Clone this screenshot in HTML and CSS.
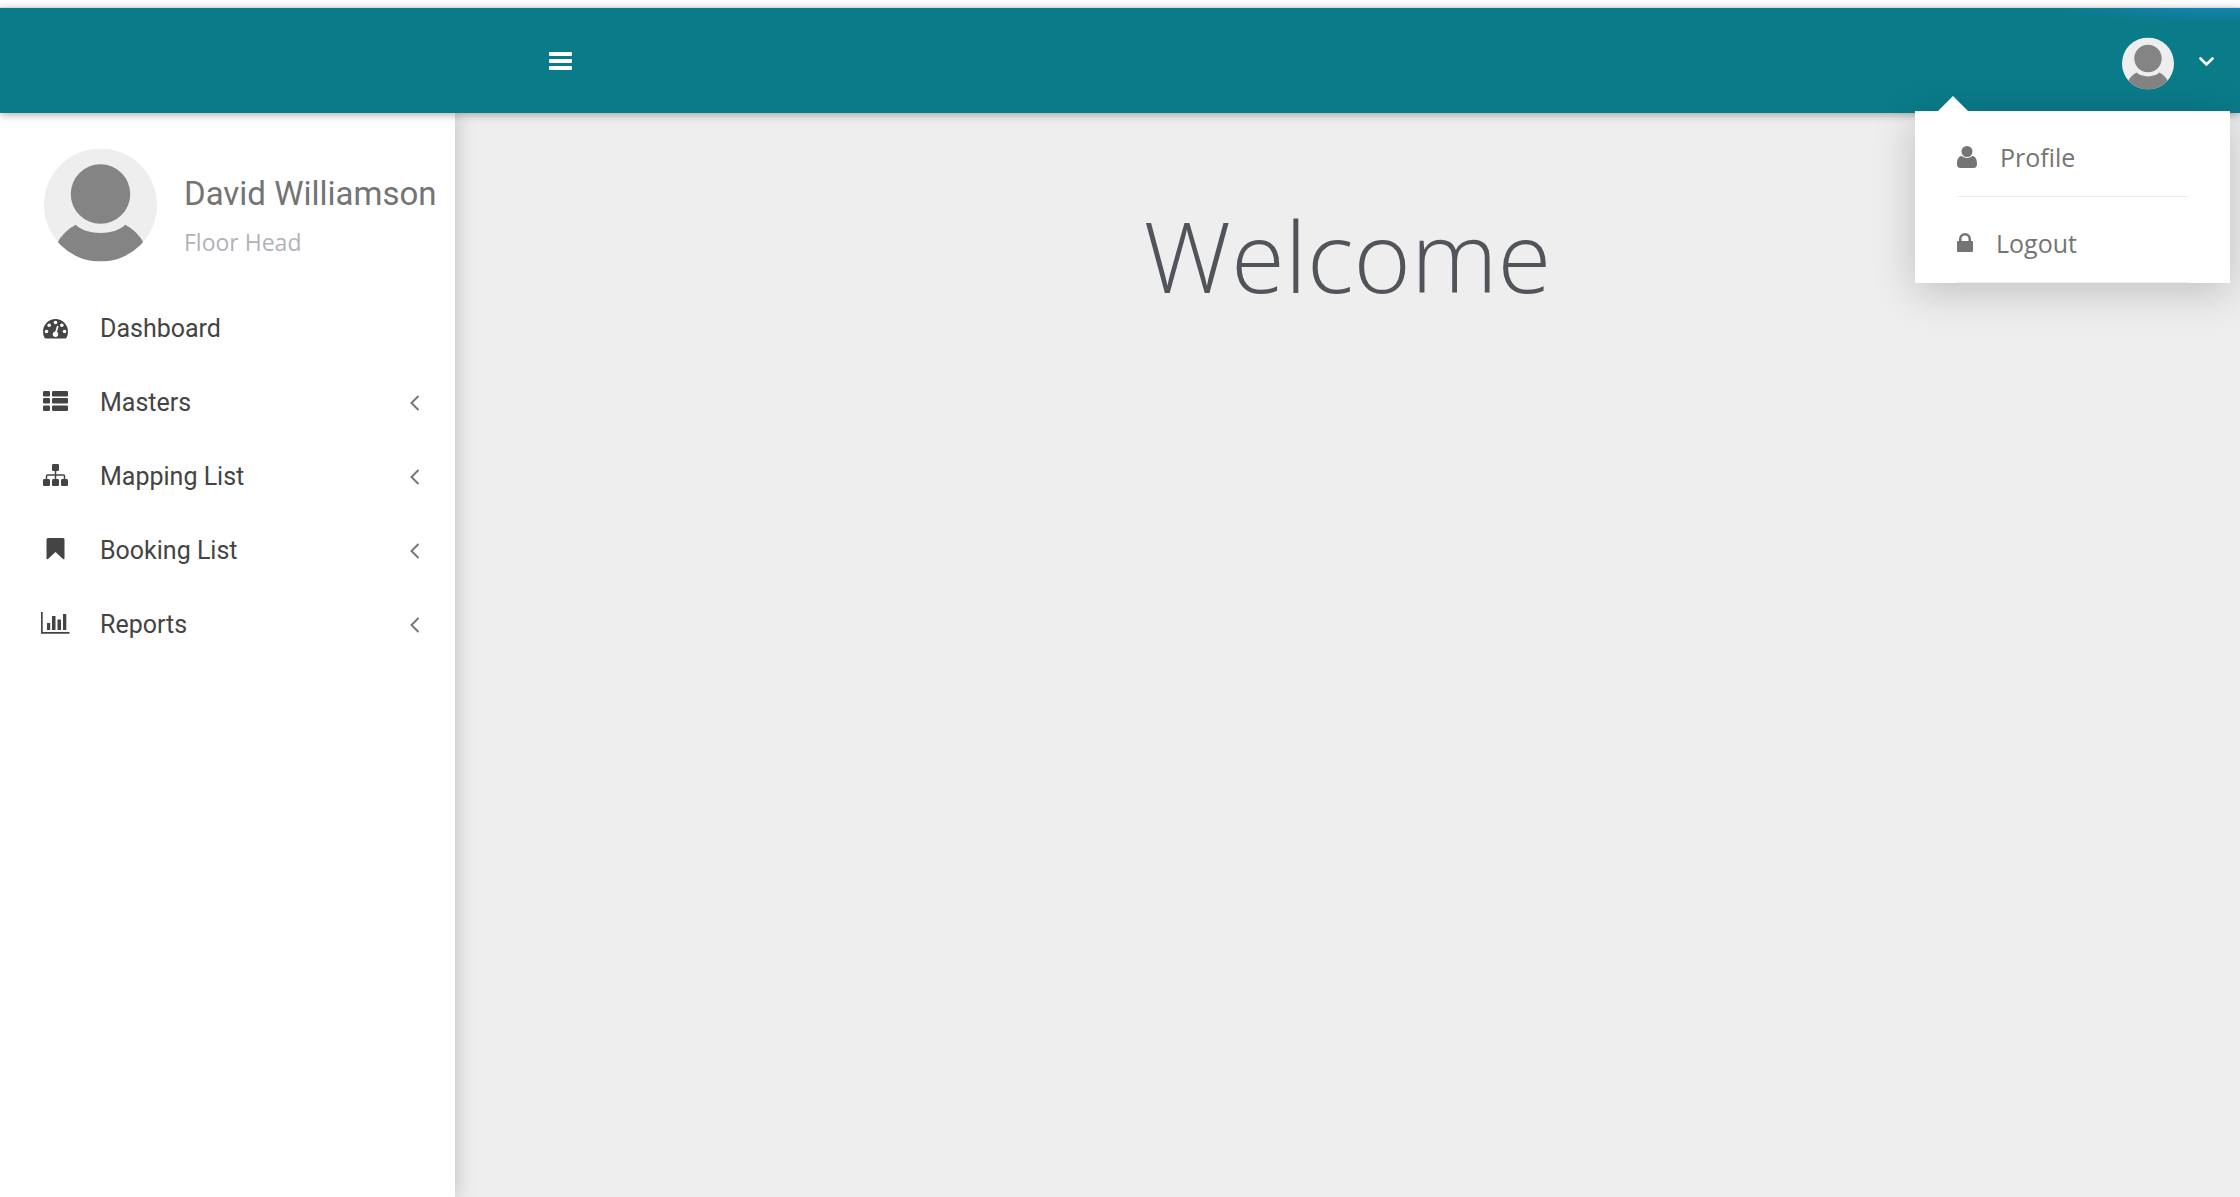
FILE: index.html
```html
<!DOCTYPE html>
<html lang="en">
<head>
<meta charset="utf-8">
<meta name="viewport" content="width=device-width, initial-scale=1">
<title>Welcome</title>
<link rel="stylesheet" href="styles.css">
</head>
<body>
<svg class="defs" aria-hidden="true">
  <symbol id="avatar" viewBox="0 0 114 114">
    <clipPath id="disc"><circle cx="57" cy="57" r="57"/></clipPath>
    <g clip-path="url(#disc)">
      <rect width="114" height="114" fill="#eee"/>
      <circle cx="57" cy="46" r="30" fill="#848484"/>
      <path fill="#848484" d="M32 77C43 88 71 88 82 77Q94 83 101 96V114H13V96Q20 83 32 77Z"/>
    </g>
  </symbol>
  <symbol id="angle-left" viewBox="0 0 10 18"><path d="M8.500 3L1.500 10L8.500 17" fill="none" stroke="currentColor" stroke-width="2"/></symbol>
</svg>

<header class="topbar">
  <button class="toggle" type="button" aria-label="Toggle menu">
    <svg width="23" height="18" viewBox="0 0 23 18" fill="currentColor"><rect width="23" height="4" rx="1"/><rect y="7" width="23" height="4" rx="1"/><rect y="14" width="23" height="4" rx="1"/></svg>
  </button>
  <div class="account">
    <button class="account-button" type="button" aria-label="Account" aria-expanded="true">
      <svg class="avatar-small"><use href="#avatar"/></svg>
      <svg class="caret" viewBox="0 0 15 10"><path d="M1.500 1.500L7.500 7.500L13.500 1.500" fill="none" stroke="currentColor" stroke-width="2.600" stroke-linecap="round"/></svg>
    </button>
    <ul class="dropdown">
      <li><a href="#profile"><svg width="20" height="22" viewBox="0 0 20 22" fill="currentColor"><circle cx="10" cy="5.500" r="5.500"/><path d="M4.500 10Q10 14 15.500 10C19 10.500 20 14 20 18Q20 22 16.500 22H3.500Q0 22 0 18C0 14 1 10.500 4.500 10Z"/></svg>Profile</a></li>
      <li><a href="#logout"><svg width="16" height="22" viewBox="0 0 16 22" fill="currentColor"><path d="M2 9V7a6 6 0 0 1 12 0v2h1q1 0 1 1v9q0 1-1 1H1q-1 0-1-1v-9q0-1 1-1ZM4.500 9h7V7a3.500 3.500 0 0 0-7 0Z"/></svg>Logout</a></li>
    </ul>
  </div>
</header>

<div class="layout">
  <aside class="sidebar">
    <div class="user">
      <svg class="avatar-large"><use href="#avatar"/></svg>
      <div>
        <p class="user-name">David Williamson</p>
        <p class="user-role">Floor Head</p>
      </div>
    </div>
    <nav class="menu">
      <a href="#dashboard">
        <svg class="icon" viewBox="0 0 30 24"><path fill="currentColor" d="M14.500 3A12.500 12.500 0 0 1 27 15.500Q27 19 25.500 21.700Q25 22.500 24.200 22.500H4.800Q4 22.500 3.500 21.700Q2 19 2 15.500A12.500 12.500 0 0 1 14.500 3Z"/><g fill="#fff"><circle cx="5.500" cy="15.500" r="1.800"/><circle cx="8.200" cy="9.200" r="1.800"/><circle cx="14.500" cy="6.500" r="1.800"/><circle cx="20.800" cy="9.200" r="1.800"/><circle cx="23.500" cy="15.500" r="1.800"/><circle cx="14.500" cy="18.200" r="2.700"/></g><path d="M14.500 18L16.600 10.500" stroke="#fff" stroke-width="1.700" stroke-linecap="round"/></svg>
        <span>Dashboard</span>
      </a>
      <a href="#masters">
        <svg class="icon" viewBox="0 0 30 24" fill="currentColor"><rect x="2" y="1" width="7" height="5.500" rx="1.300"/><rect x="11" y="1" width="16" height="5.500" rx="1.300"/><rect x="2" y="8" width="7" height="5.500" rx="1.300"/><rect x="11" y="8" width="16" height="5.500" rx="1.300"/><rect x="2" y="15.500" width="7" height="5.500" rx="1.300"/><rect x="11" y="15.500" width="16" height="5.500" rx="1.300"/></svg>
        <span>Masters</span><svg class="angle"><use href="#angle-left"/></svg>
      </a>
      <a href="#mapping">
        <svg class="icon" viewBox="0 0 30 24" fill="currentColor"><rect x="11" y="0" width="7" height="7" rx="1.300"/><rect x="2" y="15" width="7" height="7" rx="1.300"/><rect x="11" y="15" width="7" height="7" rx="1.300"/><rect x="20" y="15" width="7" height="7" rx="1.300"/><path d="M14.500 6V16M5.500 16V12Q5.500 11 6.500 11H22.500Q23.500 11 23.500 12V16" fill="none" stroke="currentColor" stroke-width="1.500"/></svg>
        <span>Mapping List</span><svg class="angle"><use href="#angle-left"/></svg>
      </a>
      <a href="#booking">
        <svg class="icon" viewBox="0 0 30 24"><path fill="currentColor" d="M7 0H22Q23.500 0 23.500 1.500V20Q23.500 22 22 21L14.500 14L7 21Q5.500 22 5.500 20V1.500Q5.500 0 7 0Z"/></svg>
        <span>Booking List</span><svg class="angle"><use href="#angle-left"/></svg>
      </a>
      <a href="#reports">
        <svg class="icon" viewBox="0 0 30 24" fill="currentColor"><path d="M0 0H1.700V20H28.500V21.700H0ZM6 11H9.200V18H6ZM11 4H14.500V18H11ZM16.500 7.500H20V18H16.500ZM22 2H25.300V18H22Z"/></svg>
        <span>Reports</span><svg class="angle"><use href="#angle-left"/></svg>
      </a>
    </nav>
  </aside>
  <main class="content"><h1>Welcome</h1></main>
</div>
</body>
</html>
```
FILE: styles.css
```css
* { box-sizing: border-box; }

body {
  margin: 0;
  min-height: 100vh;
  display: flex;
  flex-direction: column;
  background: #fff;
  color: #747474;
  font-family: "Open Sans", sans-serif;
  font-size: 25px;
}

h1, p, ul { margin: 0; padding: 0; }
ul { list-style: none; }
a { color: inherit; text-decoration: none; }
svg { display: block; flex: none; }
button { border: 0; padding: 0; background: none; color: #fff; cursor: pointer; }

.defs { position: absolute; width: 0; height: 0; }

.topbar {
  position: relative;
  z-index: 2;
  display: flex;
  align-items: center;
  justify-content: space-between;
  height: 106px;
  margin-top: 7px;
  padding: 0 26px 0 549px;
  border-top: 1px solid #d5dcde;
  background: radial-gradient(170px 14px at calc(100% - 20px) 0, #1583b5, rgba(21, 131, 181, 0)), #0a7b89;
  box-shadow: 0 2px 8px rgba(0, 0, 0, 0.3);
}

.account { position: relative; }

.account-button { display: flex; align-items: center; gap: 25px; padding-top: 6px; }

.avatar-small { width: 52px; height: 53px; }

.caret { width: 15px; height: 10px; margin-bottom: 4px; }

.dropdown {
  position: absolute;
  top: 100%;
  right: -16px;
  width: 315px;
  margin-top: 21px;
  padding: 0 42px;
  background: #fff;
  box-shadow: 0 8px 40px rgba(0, 0, 0, 0.2);
}

.dropdown::before {
  content: "";
  position: absolute;
  left: 23px;
  bottom: 100%;
  border: 15px solid transparent;
  border-top: 0;
  border-bottom-color: #fff;
}

.dropdown a {
  display: flex;
  align-items: center;
  gap: 23px;
  height: 86px;
  padding-top: 6px;
  border-bottom: 1px solid #ececec;
}

.layout { flex: 1; display: flex; }

.sidebar {
  position: relative;
  z-index: 1;
  width: 455px;
  background: #fff;
  box-shadow: 0 0 20px rgba(0, 0, 0, 0.22);
}

.user {
  display: flex;
  align-items: center;
  gap: 27px;
  padding: 35px 0 29px 44px;
  white-space: nowrap;
}

.avatar-large { width: 113px; height: 114px; }

.user-name { padding-top: 24px; font: 33px/44px Roboto, sans-serif; }
.user-role { padding-top: 6px; color: #b0b3b9; font-size: 23px; line-height: 40px; }

.menu a {
  display: flex;
  align-items: center;
  height: 74px;
  padding: 0 35px 0 41px;
  color: #444;
  font-family: Roboto, sans-serif;
}

.icon { width: 30px; height: 24px; margin-right: 29px; }
.angle { width: 10px; height: 18px; margin-left: auto; color: #777; }

.content { flex: 1; padding-top: 75px; background: #eee; text-align: center; }

.content h1 { color: #515459; font-size: 98px; font-weight: 300; line-height: 134px; }
```
